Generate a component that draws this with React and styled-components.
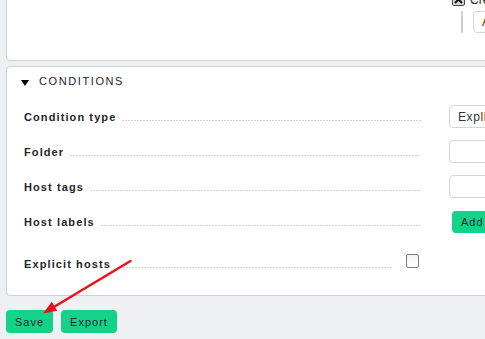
import React from "react";
import styled, { createGlobalStyle } from "styled-components";

const Global = createGlobalStyle`
  html, body { margin: 0; padding: 0; overflow: hidden; background: #eff0f3; }
  body { font-family: "Liberation Sans", Arial, sans-serif; color: #1e262e; }
`;

const Page = styled.div`
  width: 640px;
  padding-left: 6px;
  margin-top: -30px;
  display: flex;
  flex-direction: column;
`;

const Card = styled.div`
  background: #ffffff;
  border: 1px solid #cdd0d8;
  border-radius: 4px;
  margin-top: ${(p) => p.$gap || 0}px;
  padding: ${(p) => p.$pad};
`;

const FormGrid = styled.div`
  display: grid;
  grid-template-columns: ${(p) => p.$label}px 1fr;
  column-gap: ${(p) => p.$gap}px;
  padding-left: 17px;
`;

const LabelCell = styled.div`
  height: ${(p) => p.$h || 35}px;
  display: flex;
  align-items: center;
`;

const LabelText = styled.span`
  font-size: 11px;
  font-weight: bold;
  letter-spacing: 1.1px;
  white-space: nowrap;
  color: #1e262e;
`;

const Leader = styled.span`
  flex: 1;
  height: 1px;
  margin: 7px 4px 0 6px;
  background-image: repeating-linear-gradient(
    to right,
    #d2d2d2 0 2px,
    transparent 2px 3px
  );
`;

const ValueCell = styled.div`
  height: ${(p) => p.$h || 35}px;
  display: flex;
  align-items: center;
  padding-left: ${(p) => p.$indent || 0}px;
`;

const TextInput = styled.div`
  box-sizing: border-box;
  width: ${(p) => p.$w || 140}px;
  height: 23px;
  border: 1px solid #d3d5da;
  border-radius: 4px;
  background: #fff;
  display: flex;
  align-items: center;
  padding-left: 8px;
  font-size: 12px;
  letter-spacing: 0.6px;
  color: #2c3540;
  white-space: nowrap;
  overflow: hidden;
`;

const GreenButton = styled.button`
  box-sizing: border-box;
  height: ${(p) => p.$h || 23}px;
  padding: 0 9px;
  border: none;
  border-radius: 4px;
  background: #13d389;
  color: #1e262e;
  font-family: "Liberation Sans", Arial, sans-serif;
  font-size: 11px;
  letter-spacing: 1px;
  cursor: pointer;
`;

const Header = styled.div`
  height: 28px;
  display: flex;
  align-items: center;
  padding-left: 14px;
  font-size: 11px;
  letter-spacing: 1.6px;
  color: #1e262e;
`;

const Triangle = styled.span`
  width: 0;
  height: 0;
  border-left: 4.5px solid transparent;
  border-right: 4.5px solid transparent;
  border-top: 6px solid #000;
  margin: 4px 10px 0 0;
`;

const Rows = styled.div`
  padding-top: 4px;
`;

const ExplicitGrid = styled(FormGrid)`
  margin-top: 7px;
`;

const CheckBox = styled.span`
  box-sizing: border-box;
  width: 13px;
  height: 14px;
  border: 1.5px solid #7a7a7a;
  border-radius: 2px;
  background: linear-gradient(#f3f3f3, #ffffff);
  margin-top: -6px;
`;

const TopValue = styled.div`
  grid-column: 2;
  padding-left: 3px;
  display: flex;
  flex-direction: column;
`;

const CheckLine = styled.div`
  display: flex;
  align-items: center;
  height: 13px;
  gap: 5px;
  font-size: 12px;
  color: #1e262e;
`;

const Nested = styled.div`
  margin: 5px 0 0 9px;
  padding-left: 10px;
  border-left: 2px solid #cfd1d6;
  height: 22px;
  display: flex;
  align-items: center;
`;

const SmallInput = styled(TextInput)`
  height: 22px;
  width: 80px;
`;

const Buttons = styled.div`
  display: flex;
  gap: 8px;
  margin-top: 14px;
`;

const Overlay = styled.svg`
  position: fixed;
  left: 0;
  top: 0;
  width: 485px;
  height: 339px;
  pointer-events: none;
`;

const rows = [
  { label: "Condition type", value: <TextInput $w={120}>Explicit hosts</TextInput> },
  { label: "Folder", value: <TextInput /> },
  { label: "Host tags", value: <TextInput /> },
  {
    label: "Host labels",
    value: (
      <ValueCell $indent={3}>
        <GreenButton $h={22}>Add to condition</GreenButton>
      </ValueCell>
    ),
  },
];

export default function App() {
  return (
    <>
      <Global />
      <Page>
        <Card $pad="22px 0 27px 0">
          <FormGrid $label={401} $gap={24}>
            <TopValue>
              <CheckLine>
                <svg width="13" height="13" viewBox="0 0 13 13">
                  <rect x="0.5" y="0.5" width="12" height="12" rx="1.5" fill="#d6d6d6" stroke="#4a4a4a" />
                  <path d="M3 3 L10 10 M10 3 L3 10" stroke="#111" strokeWidth="2" />
                </svg>
                <span>Create rule</span>
              </CheckLine>
              <Nested>
                <SmallInput>All</SmallInput>
              </Nested>
            </TopValue>
          </FormGrid>
        </Card>

        <Card $gap={5} $pad="0 0 13px 0">
          <Header>
            <Triangle />
            CONDITIONS
          </Header>
          <Rows>
            {rows.map((r) => (
              <FormGrid key={r.label} $label={401} $gap={24}>
                <LabelCell>
                  <LabelText>{r.label}</LabelText>
                  <Leader />
                </LabelCell>
                {r.label === "Host labels" ? r.value : <ValueCell>{r.value}</ValueCell>}
              </FormGrid>
            ))}
          </Rows>
          <ExplicitGrid $label={372} $gap={10}>
            <LabelCell $h={36}>
              <LabelText>Explicit hosts</LabelText>
              <Leader />
            </LabelCell>
            <ValueCell $h={36}>
              <CheckBox />
            </ValueCell>
          </ExplicitGrid>
        </Card>

        <Buttons>
          <GreenButton>Save</GreenButton>
          <GreenButton>Export</GreenButton>
        </Buttons>
      </Page>
      <Overlay viewBox="0 0 485 339">
        <line x1="130.5" y1="261" x2="53" y2="307.5" stroke="#e8141b" strokeWidth="2.6" strokeLinecap="round" />
        <polygon points="43,313.5 57.2,310.8 51.8,301.8" fill="#e8141b" />
      </Overlay>
    </>
  );
}
